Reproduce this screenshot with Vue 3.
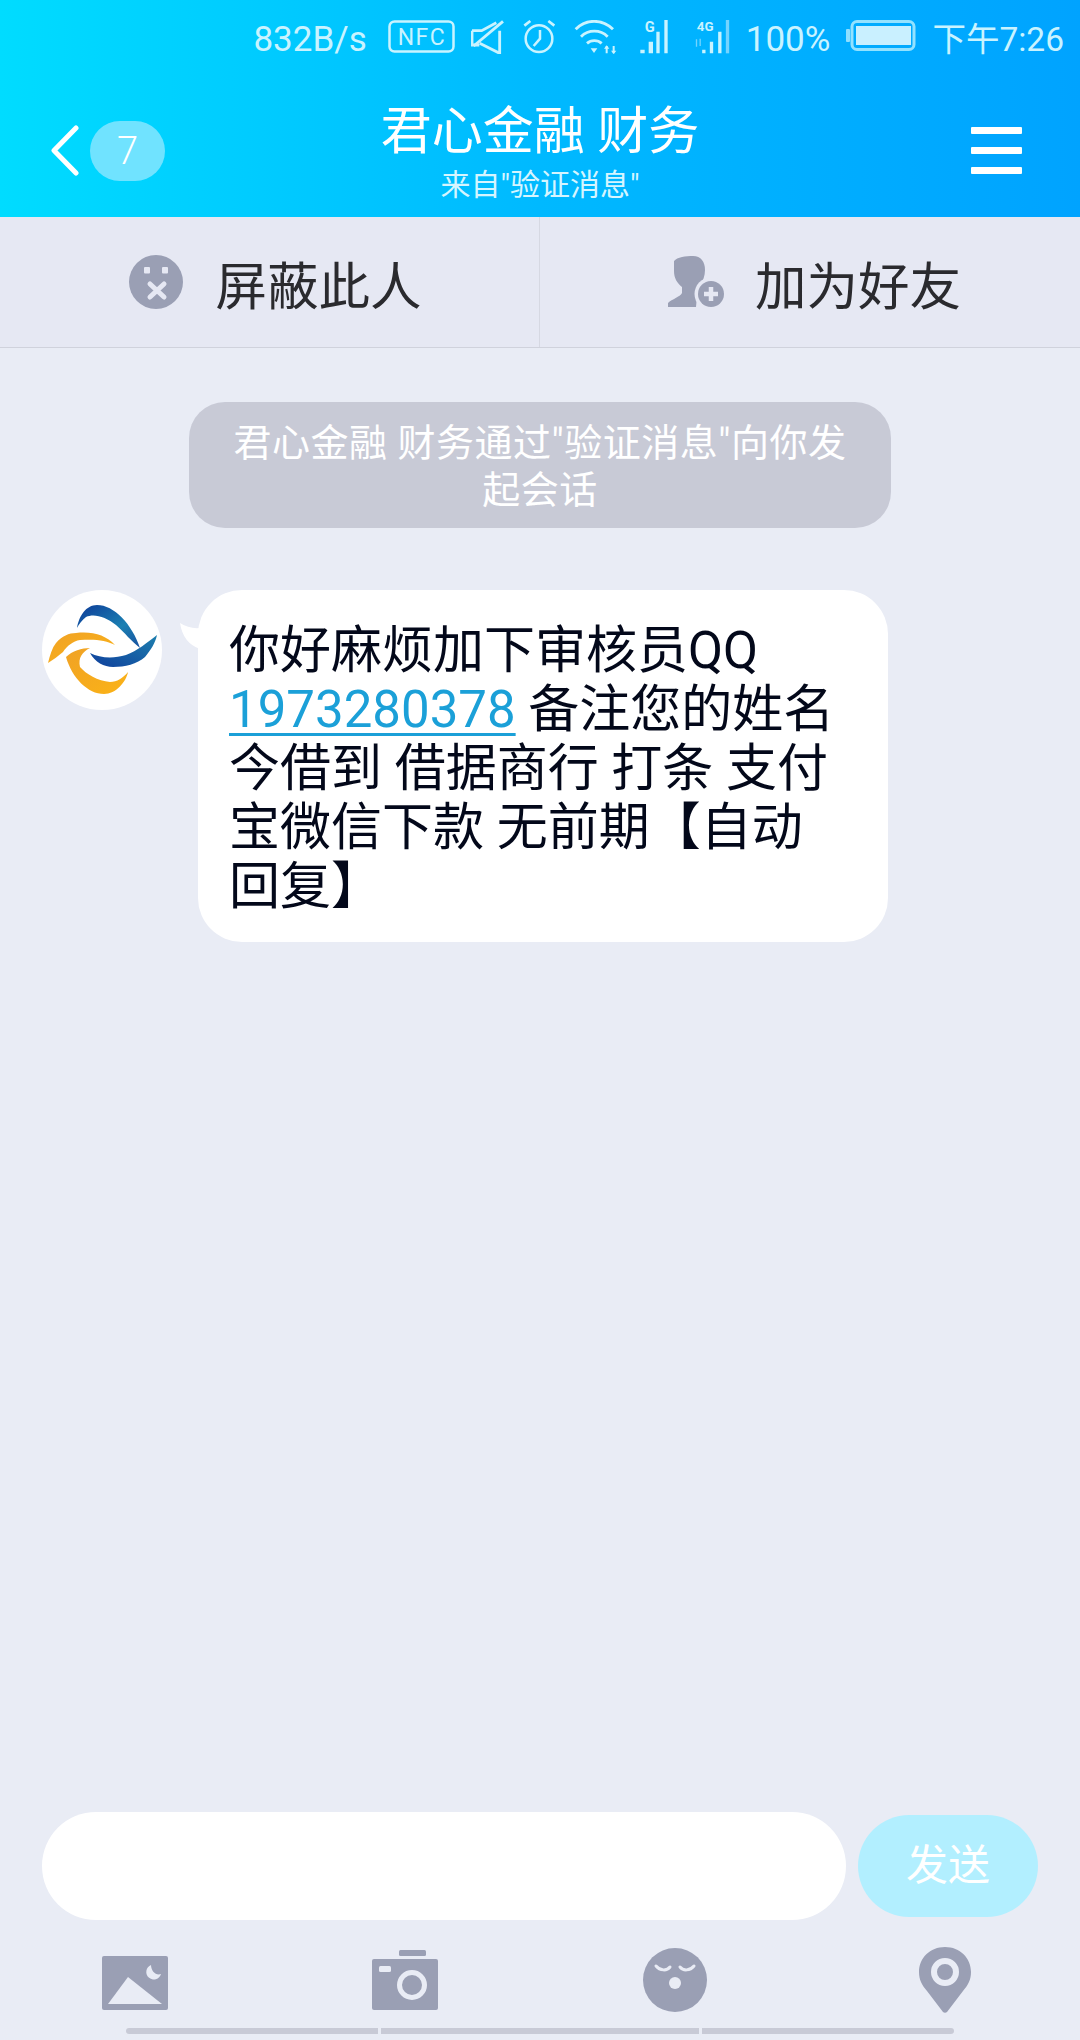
<script setup>
const lines = ['今借到 借据商行 打条 支付', '宝微信下款 无前期【自动', '回复】']
</script>

<template>
  <div class="page">
    <header class="head">
      <div class="status">
        <span class="st-text">832B/s</span>
        <svg class="ml5" width="67" height="33" viewBox="0 0 67 33"><rect x="1.5" y="1.5" width="64" height="30" rx="5" fill="none" stroke="#c9f3ff" stroke-width="2.5"/><text x="34" y="25" text-anchor="middle" font-size="23" font-family="Roboto, sans-serif" fill="#c9f3ff" letter-spacing="1.5">NFC</text></svg>
        <svg width="34" height="34" viewBox="36 30 102 102" fill="none" stroke="#c9f3ff" stroke-width="8.500"><path d="M132 34 44 108"/><path d="M39 62h29l44-24"/><path d="M39 62v43h22"/><path d="M62 100l60 30V62"/></svg>
        <svg class="ml2" width="35" height="34" viewBox="190 30 105 102" fill="none" stroke="#c9f3ff"><circle cx="238" cy="86" r="40" stroke-width="7.500"/><path d="M241 60v26l-19 22" stroke-width="7.500"/><path d="M194 47l18-14M284 47l-18-14" stroke-width="8"/></svg>
        <svg width="44" height="34" viewBox="345 30 132 102"><path d="M350 58c30-32 80-32 112 0M366 80c22-22 58-22 80 0M384 100c12-11 32-11 44 0" fill="none" stroke="#c9f3ff" stroke-width="8.500"/><path d="M395 115h20l-10 14z" fill="#c9f3ff"/><path d="M443 130v-22M464 108v22" stroke="#c9f3ff" stroke-width="6"/><path d="M435 116l8-10 8 10zM456 122l8 10 8-10z" fill="#c9f3ff"/></svg>
        <svg class="ml5" width="30" height="34" viewBox="536 30 90 102"><text x="568" y="66" font-size="44" font-weight="700" font-family="Roboto, sans-serif" fill="#c9f3ff" text-anchor="middle">G</text><path d="M540 119h13v11h-13zM565 95h13v35h-13zM588 65h10v65h-10zM612 30h10v100h-10z" fill="#c9f3ff"/></svg>
        <svg class="ml8" width="37" height="34" viewBox="695 30 110 102"><text x="731" y="64" font-size="40" font-weight="700" font-family="Roboto, sans-serif" fill="#c9f3ff" text-anchor="middle">4G</text><path d="M722 119h10v11h-10zM745 95h10v35h-10zM770 65h10v65h-10z" fill="#c9f3ff"/><path d="M793 30h10v100h-10z" fill="#75d4ff"/><path d="M705 88v22M716 86v22" stroke="#75d4ff" stroke-width="4"/></svg>
        <span class="st-text">100%</span>
        <svg width="70" height="31" viewBox="0 0 70 31"><rect x="0" y="9" width="4" height="13" rx="1" fill="#8fdfff"/><rect x="6" y="1.5" width="62" height="28" rx="5" fill="none" stroke="#93e2ff" stroke-width="3"/><rect x="10" y="6" width="55" height="19" fill="#c9f0ff"/></svg>
        <span class="st-text time">下午7:26</span>
      </div>
      <div class="nav">
        <div class="nav-left">
          <svg width="29" height="51" viewBox="0 0 29 51"><path d="M26 3 4 25.5 26 48" fill="none" stroke="#fff" stroke-width="5" stroke-linecap="round" stroke-linejoin="round"/></svg>
          <span class="badge">7</span>
        </div>
        <div class="title">
          <div class="t1">君心金融 财务</div>
          <div class="t2">来自"验证消息"</div>
        </div>
        <div class="menu"><i></i><i></i><i></i></div>
      </div>
    </header>

    <div class="tabs">
      <div class="tab tab-l">
        <svg width="54" height="54" viewBox="0 0 54 54"><circle cx="27" cy="27" r="27" fill="#9a9fb4"/><rect x="15" y="12" width="6" height="6.500" rx="1" fill="#e6e8f3"/><rect x="33" y="12" width="6" height="6.500" rx="1" fill="#e6e8f3"/><path d="M21 29 35 42M35 29 21 42" stroke="#e6e8f3" stroke-width="5" stroke-linecap="round"/></svg>
        <span>屏蔽此人</span>
      </div>
      <div class="tab tab-r">
        <svg width="57" height="52" viewBox="0 0 57 52"><path d="M6 5C9 1 18 0 25 0c8 0 12 6 12 14 0 6-2 11-5 15-3 4-4 7-3 11l-1 11H0v-4c4-4 12-6 14-10v-6C9 27 6 22 6 15z" fill="#9a9fb4"/><circle cx="43" cy="38" r="16.500" fill="#e6e8f3"/><circle cx="43" cy="38" r="13" fill="#9a9fb4"/><path d="M43 31v14M36 38h14" stroke="#e6e8f3" stroke-width="4.500"/></svg>
        <span>加为好友</span>
      </div>
    </div>

    <main class="chat">
      <div class="notice">君心金融 财务通过"验证消息"向你发起会话</div>
      <div class="msg">
        <svg class="avatar" width="120" height="120" viewBox="0 0 120 120">
          <circle cx="60" cy="60" r="60" fill="#fff"/>
          <defs>
            <linearGradient id="bl" x1="0" y1="0" x2="1" y2="1"><stop offset="0" stop-color="#0d3a98"/><stop offset=".6" stop-color="#1b80b2"/><stop offset="1" stop-color="#18509f"/></linearGradient>
            <linearGradient id="bl2" x1="0" y1="1" x2="1" y2="0"><stop offset="0" stop-color="#0f3f9c"/><stop offset="1" stop-color="#1d7fae"/></linearGradient>
            <linearGradient id="or" x1="0" y1="0" x2="1" y2="1"><stop offset="0" stop-color="#f0a226"/><stop offset="1" stop-color="#fbb316"/></linearGradient>
          </defs>
          <path d="M35 38C37 26 44 15 55 15 72 15 90 34 98 58 88 50 84 44 74 35 64 27 52 23 44 27 40 30 37 34 35 38z" fill="url(#bl)"/>
          <path d="M48 63c10 5 23 6 36 2 11-4 22-13 31-20-2 9-6 14-12 22-8 7-20 10-32 10-9 0-18-5-23-14z" fill="url(#bl2)"/>
          <path d="M6 73c2-8 4-15 8-20 6-7 13-10 20-10 16-2 30 2 39 12-9-5-20-6-35-5-7 1-13 6-17 12-5 4-10 8-15 11z" fill="url(#or)"/>
          <path d="M24 67C30 61 40 58 48 58 40 62 36 68 38 77 44 84 56 91 68 92 75 92 81 88 86 82 84 92 74 104 62 104 46 104 30 88 24 67z" fill="url(#or)"/>
        </svg>
        <div class="bubble">
          <svg class="tail" width="20" height="26" viewBox="0 0 20 26"><path d="M0 0Q9 6 20 5V26Q3 20 0 0z" fill="#fff"/></svg>
          <div>你好麻烦加下审核员QQ</div>
          <div><a class="link">1973280378</a> 备注您的姓名</div>
          <div v-for="l in lines" :key="l">{{ l }}</div>
        </div>
      </div>
    </main>

    <div class="input-row">
      <div class="input"></div>
      <div class="send">发送</div>
    </div>
    <div class="tools">
      <svg width="66" height="66" viewBox="0 0 66 66"><rect y="9" width="66" height="54" rx="2" fill="#9a9fb4"/><path d="M6 57 26 30 60 57z" fill="#e9ecf5"/><path d="M49 18a7.500 7.500 0 1 0 10 9c-5 2-10-3-10-9z" fill="#e9ecf5"/></svg>
      <svg width="66" height="66" viewBox="0 0 66 66"><rect x="27" y="3" width="27" height="6" rx="1.500" fill="#9a9fb4"/><rect y="12" width="66" height="51" rx="2" fill="#9a9fb4"/><rect x="7" y="19" width="12" height="6" rx="1.500" fill="#e9ecf5"/><circle cx="40" cy="38" r="12.500" fill="none" stroke="#e9ecf5" stroke-width="5"/></svg>
      <svg width="64" height="66" viewBox="0 0 64 66"><circle cx="32" cy="33" r="32" fill="#9a9fb4"/><path d="M13 19c4 5 11 5 14 1M37 20c3 4 10 4 14-1" fill="none" stroke="#e9ecf5" stroke-width="3" stroke-linecap="round"/><circle cx="32" cy="36" r="6" fill="#e9ecf5"/></svg>
      <svg width="52" height="66" viewBox="0 0 52 66"><path d="M26 0c15 0 26 11 26 25 0 8-3 13-8 19L28 65c-1 1-3 1-4 0L8 44C3 38 0 33 0 25 0 11 11 0 26 0z" fill="#9a9fb4"/><circle cx="26" cy="25" r="11" fill="none" stroke="#e9ecf5" stroke-width="6"/></svg>
    </div>
    <div class="handle"><i class="h1"></i><i class="h2"></i><i class="h3"></i></div>
  </div>
</template>

<style>
html, body { margin: 0; padding: 0; }
</style>

<style scoped>
.page {
  width: 1080px;
  height: 2040px;
  display: flex;
  flex-direction: column;
  background: #e9ecf5;
  overflow: hidden;
  font-family: Roboto, "Noto Sans CJK SC", sans-serif;
}
.head {
  height: 217px;
  background: linear-gradient(90deg, #00dcff 0%, #00b9ff 50%, #00a3ff 100%);
  display: flex;
  flex-direction: column;
  flex: none;
}
.status {
  height: 74px;
  display: flex;
  align-items: flex-start;
  justify-content: flex-end;
  gap: 16px;
  padding-right: 16px;
  padding-top: 20px;
  color: #c9f3ff;
  box-sizing: border-box;
  flex: none;
}
.status svg { flex: none; }
.ml2 { margin-left: 2px; }
.ml5 { margin-left: 5px; }
.ml8 { margin-left: 8px; }
.st-text { font-size: 35px; line-height: 40px; }
.time { font-size: 33.500px; }
.nav {
  flex: 1;
  display: flex;
  align-items: center;
  position: relative;
  justify-content: space-between;
  padding: 10px 58px 0 50px;
}
.nav-left { display: flex; align-items: center; gap: 11px; }
.badge {
  width: 75px;
  height: 60px;
  border-radius: 30px;
  background: #70e3ff;
  color: #fff;
  font-size: 38px;
  line-height: 60px;
  text-align: center;
  font-weight: 300;
}
.title { position: absolute; left: 0; right: 0; top: 28px; text-align: center; color: #fff; }
.t1 { font-size: 51px; line-height: 60px; }
.t2 { font-size: 30px; line-height: 40px; margin-top: 3px; color: #d5f5ff; }
.menu { display: flex; flex-direction: column; gap: 13px; }
.menu i { display: block; width: 51px; height: 7px; background: #fff; border-radius: 1px; }
.tabs {
  flex: none;
  height: 131px;
  display: flex;
  background: #e6e8f3;
  border-bottom: 1px solid #d0d2dc;
  box-sizing: border-box;
}
.tab {
  display: flex;
  align-items: center;
  justify-content: center;
  gap: 32px;
  font-size: 51.500px;
  color: #2a2a2e;
}
.tab-l { width: 539px; padding-left: 12px; box-sizing: border-box; }
.tab-r { width: 541px; border-left: 1px solid #d6d8e2; padding-left: 9px; gap: 30px; box-sizing: border-box; }
.chat { flex: 1; display: flex; flex-direction: column; align-items: center; padding-top: 54px; }
.notice {
  width: 702px;
  box-sizing: border-box;
  padding: 18px 36px 14px;
  background: #c8cad6;
  border-radius: 36px;
  color: #fff;
  font-size: 38px;
  letter-spacing: 0.5px;
  line-height: 47px;
  text-align: center;
}
.msg { align-self: flex-start; display: flex; margin: 62px 0 0 42px; gap: 36px; }
.avatar { flex: none; }
.bubble {
  position: relative;
  width: 690px;
  box-sizing: border-box;
  padding: 31px 30px 26px 31px;
  background: #fff;
  border-radius: 44px;
  color: #03081a;
  font-size: 51px;
  line-height: 59px;
}
.tail { position: absolute; left: -18px; top: 33px; }
.link { color: #1ba0d8; text-decoration: underline; text-underline-offset: 6px; text-decoration-thickness: 3px; }
.input-row { flex: none; display: flex; align-items: center; padding: 0 42px; gap: 12px; }
.input { width: 804px; height: 108px; background: #fff; border-radius: 54px; }
.send {
  width: 180px;
  height: 102px;
  border-radius: 51px;
  background: #b2efff;
  color: #fff;
  font-size: 42px;
  line-height: 102px;
  text-align: center;
}
.tools {
  flex: none;
  height: 66px;
  margin-top: 27px;
  display: grid;
  grid-template-columns: 270px 271px 276px 52px;
  padding-left: 102px;
}
.handle { flex: none; height: 6px; margin: 15px 0 6px 126px; width: 828px; display: flex; gap: 3px; }
.handle i { display: block; height: 6px; background: #c8cad6; }
.h1 { width: 252px; border-radius: 3px 0 0 3px; }
.h2 { width: 318px; }
.h3 { width: 252px; border-radius: 0 3px 3px 0; }
</style>
